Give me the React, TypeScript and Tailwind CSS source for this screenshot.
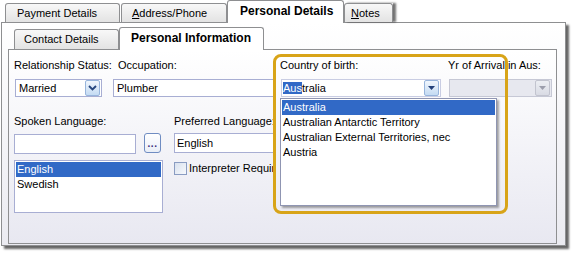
import clsx from "clsx";

const ArrowBtn = ({ kind }: { kind: "chevron" | "tri" | "disabled" }) => (
  <div
    className={clsx(
      "flex h-[16px] w-[15px] shrink-0 items-center justify-center rounded-[2px] border",
      kind === "disabled"
        ? "border-[#c2c4cf] bg-gradient-to-b from-[#eceef3] to-[#d9dbe4]"
        : "border-[#98b5dc] bg-gradient-to-b from-[#f0f6fd] to-[#c4dbf3]"
    )}
  >
    {kind === "chevron" ? (
      <svg width="9" height="6" viewBox="0 0 9 6">
        <path d="M1 1l3.5 3.5L8 1" fill="none" stroke="#27477f" strokeWidth="1.9" />
      </svg>
    ) : (
      <svg width="7" height="4" viewBox="0 0 7 4">
        <path d="M0 0h7L3.5 4z" fill={kind === "disabled" ? "#9c9eac" : "#22407a"} />
      </svg>
    )}
  </div>
);

const OuterTab = ({ label, w, pl, active }: { label: React.ReactNode; w: string; pl: string; active?: boolean }) => (
  <div
    className={clsx(
      "flex items-center rounded-t-[3px] border border-b-0 whitespace-nowrap",
      w,
      pl,
      active
        ? "relative z-10 -mb-px h-[23px] border-[#8e8f91] bg-white pb-[2px] text-[12px] font-bold"
        : "h-[19px] border-[#8e8f91] bg-gradient-to-b from-[#f8f8f8] to-[#e3e3e3]"
    )}
  >
    {label}
  </div>
);

const countries = [
  "Australia",
  "Australian Antarctic Territory",
  "Australian External Territories, nec",
  "Austria",
];

export default function App() {
  return (
    <div className="relative h-[256px] w-[574px] overflow-hidden bg-white font-['Liberation_Sans',Arial,sans-serif] text-[11px] leading-[13px] text-black">
      {/* outer tabs */}
      <div className="flex h-[22px] items-end pl-[5px]">
        <OuterTab w="w-[115px]" pl="pl-[11px]" label="Payment Details" />
        <div className="w-px" />
        <OuterTab
          w="w-[106px]"
          pl="pl-[10px]"
          label={
            <>
              <span className="underline underline-offset-1">A</span>ddress/Phone
            </>
          }
        />
        <OuterTab w="w-[117px]" pl="pl-[12px]" label="Personal Details" active />
        <div className="shadow-[3px_0_2px_rgba(0,0,0,0.55)]">
          <OuterTab
            w="w-[49px]"
            pl="pl-[6px]"
            label={
              <>
                <span className="underline underline-offset-1">N</span>otes
              </>
            }
          />
        </div>
      </div>

      {/* outer panel */}
      <div className="ml-px h-[224px] w-[565px] border border-[#8e8f91] bg-gradient-to-b from-white to-[#ebebf1] shadow-[3px_3px_2px_rgba(0,0,0,0.6)]">
        {/* inner tabs */}
        <div className="flex h-[26px] items-end pl-[12px]">
          <div className="flex h-[20px] w-[105px] items-center rounded-t-[3px] border border-b-0 border-[#8e8f91] bg-gradient-to-b from-[#f8f8f8] to-[#e3e3e3] pl-[9px]">
            Contact Details
          </div>
          <div className="relative z-10 -mb-px flex h-[23px] w-[145px] items-center rounded-t-[3px] border border-b-0 border-[#8e8f91] bg-white pb-[2px] pl-[11px] text-[12px] font-bold">
            Personal Information
          </div>
        </div>

        {/* inner panel */}
        <div className="relative ml-[6px] h-[195px] w-[549px] border border-[#8e8f91] bg-gradient-to-b from-white to-[#e8e8f1]">
          {/* row 1 */}
          <div className="flex pl-[6px] pt-[9px]">
            <div className="w-[87px]">
              <div className="-ml-px mb-[7px] h-[13px] whitespace-nowrap">Relationship Status:</div>
              <div className="flex h-[18px] items-center justify-between border border-[#a8aed3] bg-white pl-[3px] pr-px">
                <span>Married</span>
                <ArrowBtn kind="chevron" />
              </div>
            </div>
            <div className="ml-[11px] w-[163px]">
              <div className="mb-[7px] h-[13px] pl-[5px]">Occupation:</div>
              <div className="flex h-[18px] items-center border border-[#a8aed3] bg-white pl-[3px]">Plumber</div>
            </div>
            <div className="relative ml-[5px] w-[160px]">
              <div className="-ml-px mb-[7px] h-[13px]">Country of birth:</div>
              <div className="flex h-[18px] items-center justify-between border border-[#c9cde3] bg-white pl-px pr-px">
                <span>
                  <span className="bg-[#3169c6] text-white">Aus</span>tralia
                </span>
                <ArrowBtn kind="tri" />
              </div>
              <div className="absolute left-[-1px] top-[39px] z-10 h-[108px] w-[217px] border border-[#8f95b2] bg-white pt-px shadow-[2px_2px_2px_rgba(0,0,0,0.35)]">
                {countries.map((c, i) => (
                  <div
                    key={c}
                    className={clsx(
                      "mx-px flex h-[15px] items-center whitespace-nowrap pl-[1px]",
                      i === 0 && "bg-[#3169c6] text-white"
                    )}
                  >
                    {c}
                  </div>
                ))}
              </div>
            </div>
            <div className="ml-[8px] w-[103px]">
              <div className="-ml-px mb-[7px] h-[13px] whitespace-nowrap">Yr of Arrival in Aus:</div>
              <div className="flex h-[18px] items-center justify-end border border-[#c6c8d5] bg-[#e7e8ef] pr-px">
                <ArrowBtn kind="disabled" />
              </div>
            </div>
          </div>

          {/* row 2 */}
          <div className="mt-[18px] flex pl-[5px]">
            <div className="w-[149px]">
              <div className="mb-[5px] h-[13px]">Spoken Language:</div>
              <div className="flex items-start">
                <div className="mt-px h-[20px] w-[122px] border border-[#a8aed3] bg-white" />
                <div className="ml-[8px] flex h-[20px] w-[17px] items-end justify-center rounded-[3px] border border-[#6f8cc2] bg-gradient-to-b from-white to-[#e9eef7] pb-[5px] text-[10px] leading-[6px] font-bold tracking-[0.5px] text-[#3a2d7c]">
                  ...
                </div>
              </div>
              <div className="mt-[6px] h-[53px] w-[149px] border border-[#a8aed3] bg-white pt-px">
                <div className="mx-px flex h-[15px] items-center bg-[#3169c6] pl-px text-white">English</div>
                <div className="mx-px flex h-[15px] items-center pl-px">Swedish</div>
              </div>
            </div>
            <div className="ml-[11px] w-[101px] overflow-hidden">
              <div className="mb-[5px] h-[13px] whitespace-nowrap">Preferred Language:</div>
              <div className="mt-px flex h-[20px] w-[102px] items-center border border-[#a8aed3] bg-white pl-[2px]">
                English
              </div>
              <div className="mt-[9px] flex items-center whitespace-nowrap">
                <div className="h-[13px] w-[13px] shrink-0 border border-[#8a9cc2] bg-gradient-to-br from-[#d9e1ee] to-[#f7f9fc]" />
                <span className="ml-[2px]">Interpreter Required</span>
              </div>
            </div>
          </div>

          {/* highlight annotation */}
          <div className="pointer-events-none absolute left-[264px] top-[4px] z-20 h-[160px] w-[235px] rounded-[8px] border-[3px] border-[#d8a418]" />
        </div>
      </div>
    </div>
  );
}
